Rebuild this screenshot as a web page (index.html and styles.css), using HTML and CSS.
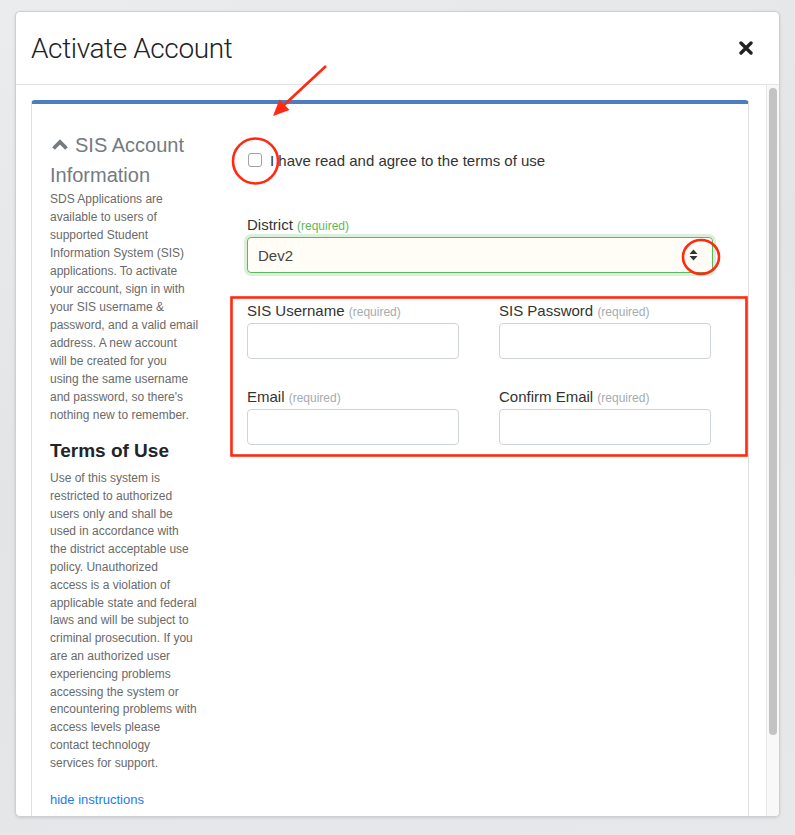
FILE: index.html
```html
<!DOCTYPE html>
<html lang="en">
<head>
    <meta charset="UTF-8">
    <meta name="viewport" content="width=device-width, initial-scale=1.0">
    <title>Activate Account</title>
    <link rel="stylesheet" href="styles.css">
</head>
<body>
    <div class="page">
        <div class="modal">
            <div class="modal-header">
                <h1 class="modal-title">Activate Account</h1>
                <button class="close" type="button" aria-label="Close">
                    <svg width="14" height="14" viewBox="0 0 14 14"><path d="M2 2L12 12M12 2L2 12" stroke="#222" stroke-width="3.4" stroke-linecap="round"/></svg>
                </button>
            </div>

            <div class="modal-body-wrap">
                <div class="modal-body">
                    <div class="card">
                        <div class="card-body">
                            <div class="instructions">
                                <h3 class="info-title">
                                    <svg class="chevron" width="18" height="13" viewBox="0 0 18 13"><path d="M2.5 10.5L9 4L15.5 10.5" fill="none" stroke="#737b80" stroke-width="3.8"/></svg>SIS Account Information
                                </h3>
                                <p>SDS Applications are<br>available to users of<br>supported Student<br>Information System (SIS)<br>applications. To activate<br>your account, sign in with<br>your SIS username &amp;<br>password, and a valid email<br>address. A new account<br>will be created for you<br>using the same username<br>and password, so there's<br>nothing new to remember.</p>

                                <h3 class="terms-title">Terms of Use</h3>
                                <p class="terms-text">Use of this system is<br>restricted to authorized<br>users only and shall be<br>used in accordance with<br>the district acceptable use<br>policy. Unauthorized<br>access is a violation of<br>applicable state and federal<br>laws and will be subject to<br>criminal prosecution. If you<br>are an authorized user<br>experiencing problems<br>accessing the system or<br>encountering problems with<br>access levels please<br>contact technology<br>services for support.</p>

                                <a href="#" class="toggle-link">hide instructions</a>
                            </div>

                            <form class="activate-form">
                                <label class="agree">
                                    <input type="checkbox" id="agree"> I have read and agree to the terms of use
                                </label>

                                <div class="form-group district">
                                    <label>District <small class="req valid">(required)</small></label>
                                    <div class="select-box">
                                        <span>Dev2</span>
                                        <svg width="9" height="12" viewBox="0 0 9 12"><path d="M4.5 0.5L8.5 5H0.5Z M4.5 11.5L8.5 7H0.5Z" fill="#333"/></svg>
                                    </div>
                                </div>

                                <div class="field-grid">
                                    <div class="form-group">
                                        <label for="username">SIS Username <small class="req">(required)</small></label>
                                        <input type="text" id="username">
                                    </div>
                                    <div class="form-group">
                                        <label for="password">SIS Password <small class="req">(required)</small></label>
                                        <input type="password" id="password">
                                    </div>
                                    <div class="form-group">
                                        <label for="email">Email <small class="req">(required)</small></label>
                                        <input type="email" id="email">
                                    </div>
                                    <div class="form-group">
                                        <label for="confirmEmail">Confirm Email <small class="req">(required)</small></label>
                                        <input type="email" id="confirmEmail">
                                    </div>
                                </div>
                            </form>
                        </div>
                    </div>
                </div>
                <div class="scrollbar"><div class="thumb"></div></div>
            </div>
        </div>

        <!-- red markup drawn over the screenshot -->
        <svg class="annotations" width="795" height="835" viewBox="0 0 795 835">
            <g fill="none" stroke="#ff2a10" stroke-width="2.6">
                <line x1="326" y1="66" x2="284" y2="105"/>
                <circle cx="255.5" cy="161" r="22.5"/>
                <ellipse cx="701" cy="257" rx="18" ry="17"/>
                <rect x="231.5" y="297.5" width="515" height="158"/>
            </g>
            <polygon points="273,116 289.5,110 279.5,99.5" fill="#ff2a10"/>
        </svg>
    </div>
</body>
</html>
```

FILE: styles.css
```css
body {
    margin: 0;
    font-family: "Liberation Sans", Arial, sans-serif;
    background-color: #e5e6e8;
    background-image: linear-gradient(160deg, #ebecee 0%, #e3e4e6 45%, #e7e8ea 100%);
}
.page {
    position: relative;
    width: 795px;
    height: 835px;
    overflow: hidden;
}
.modal {
    margin: 11px 0 0 15px;
    width: 763px;
    height: 804px;
    background-color: #fff;
    border: 1px solid #cdcfd2;
    border-radius: 5px;
    box-shadow: 0 1px 3px rgba(0, 0, 0, 0.12);
    overflow: hidden;
}
.modal-header {
    display: flex;
    align-items: center;
    justify-content: space-between;
    height: 72px;
    padding: 0 26px 0 15px;
    border-bottom: 1px solid #e3e3e3;
}
.modal-title {
    margin: 0;
    font-family: Roboto, "Liberation Sans", sans-serif;
    font-weight: 300;
    font-size: 28px;
    color: #222;
    letter-spacing: -0.4px;
}
.close {
    background: none;
    border: none;
    padding: 0;
    width: 14px;
    height: 14px;
    display: flex;
    cursor: pointer;
}
.modal-body-wrap {
    display: flex;
    height: 731px;
    overflow: hidden;
}
.modal-body {
    flex: 1;
    padding: 15px 17px 0 15px;
}
.scrollbar {
    width: 8px;
    padding: 3px 2px;
    background-color: #f8f8f8;
    border-left: 1px solid #e8e8e8;
}
.thumb {
    height: 647px;
    background-color: #c3c3c3;
    border-radius: 4px;
}
.card {
    border: 1px solid #dedede;
    border-top: 4px solid #4a7ebf;
    border-radius: 4px;
}
.card-body {
    display: flex;
    padding: 26px 35px 60px 18px;
}
.instructions {
    width: 150px;
    flex-shrink: 0;
}
.instructions h3 {
    margin: 0;
    font-size: 20px;
    line-height: 30px;
}
.info-title {
    font-weight: normal;
    color: #737b80;
}
.chevron {
    margin: 0 6px 0 1px;
    vertical-align: 1px;
}
.instructions .terms-title {
    font-weight: bold;
    color: #212529;
    margin: 12px 0 4px;
    font-size: 19px;
}
.instructions p {
    margin: 0;
    font-size: 12px;
    line-height: 18px;
    color: #6a6a6a;
}
.instructions .terms-text {
    line-height: 17.8px;
}
.toggle-link {
    display: block;
    margin-top: 18px;
    font-size: 13px;
    line-height: 18px;
    color: #1a7cf0;
    text-decoration: none;
}
.activate-form {
    margin-left: 47px;
    flex: 1;
}
.agree {
    display: flex;
    align-items: center;
    margin-top: 20px;
    height: 20px;
    font-size: 15px;
    color: #333;
}
.agree input {
    appearance: none;
    width: 14px;
    height: 14px;
    margin: 0 8px 0 1px;
    border: 1px solid #9ea3a8;
    border-radius: 3px;
    background-color: #fff;
}
.form-group {
    margin-bottom: 27px;
}
.form-group label {
    display: block;
    font-size: 15px;
    line-height: 21px;
    color: #333;
}
.req {
    font-size: 12px;
    color: #a4abb1;
}
.req.valid {
    color: #5cb85c;
}
.district {
    margin-top: 44px;
}
.select-box {
    display: flex;
    align-items: center;
    justify-content: space-between;
    height: 34px;
    padding: 0 14px 0 10px;
    border: 1px solid #5cb85c;
    border-radius: 4px;
    background-color: #fffdf5;
    box-shadow: 0 0 0 3px rgba(92, 184, 92, 0.22);
    font-size: 15px;
    color: #444;
}
.field-grid {
    display: grid;
    grid-template-columns: 212px 212px;
    column-gap: 40px;
}
.field-grid input {
    display: block;
    width: 212px;
    height: 36px;
    box-sizing: border-box;
    border: 1px solid #cfd4d9;
    border-radius: 4px;
    background-color: #fff;
}
.annotations {
    position: absolute;
    top: 0;
    left: 0;
    pointer-events: none;
}
```
